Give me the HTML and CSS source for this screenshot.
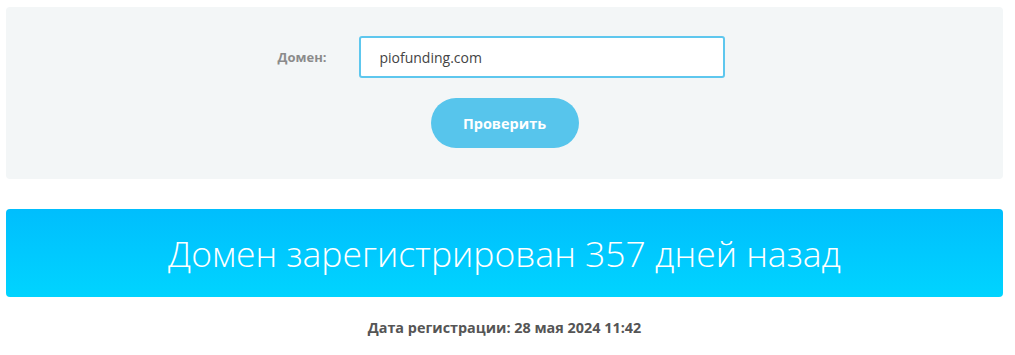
FILE: index.html
```html
<!DOCTYPE html>
<html lang="ru">
<head>
    <meta charset="UTF-8">
    <meta name="viewport" content="width=device-width, initial-scale=1.0">
    <title>Проверка возраста домена</title>
    <link rel="stylesheet" href="styles.css">
</head>
<body>
    <!-- форма проверки -->
    <div class="check-panel">
        <div class="form-row">
            <label class="form-label" for="domain">Домен:</label>
            <input type="text" class="form-input" id="domain" value="piofunding.com">
        </div>
        <button class="check-button">Проверить</button>
    </div>

    <!-- результат -->
    <div class="result-banner">Домен зарегистрирован 357 дней назад</div>
    <div class="result-date">Дата регистрации: 28 мая 2024 11:42</div>
</body>
</html>
```

FILE: styles.css
```css
body {
    margin: 0;
    padding: 7px 12px 0 6px;
    font-family: 'Open Sans', 'Noto Sans', sans-serif;
    background: #ffffff;
}

.check-panel {
    background: #f3f6f7;
    border-radius: 4px;
    height: 172px;
    box-sizing: border-box;
    padding-top: 29px;
    display: flex;
    flex-direction: column;
    align-items: center;
}

.form-row {
    display: flex;
    align-items: center;
    gap: 33px;
    margin-right: 6px;
}

.form-label {
    color: #8b8b8b;
    font-size: 13px;
    font-weight: 700;
}

.form-input {
    width: 366px;
    height: 42px;
    box-sizing: border-box;
    border: 2px solid #5ec7ee;
    border-radius: 3px;
    padding: 0 18px;
    font-family: inherit;
    font-size: 14px;
    color: #444;
    background: #fff;
    outline: none;
}

.check-button {
    margin-top: 20px;
    width: 148px;
    height: 50px;
    border: none;
    border-radius: 25px;
    background: #57c5ec;
    color: #fff;
    font-family: inherit;
    font-size: 14.5px;
    font-weight: 700;
    cursor: pointer;
}

.result-banner {
    margin-top: 30px;
    height: 88px;
    border-radius: 4px;
    background: linear-gradient(#00befd, #00d4ff);
    color: #fff;
    font-size: 35.5px;
    font-weight: 300;
    display: flex;
    align-items: center;
    justify-content: center;
}

.result-date {
    margin-top: 21px;
    text-align: center;
    color: #555;
    font-size: 14.4px;
    font-weight: 700;
}
```
